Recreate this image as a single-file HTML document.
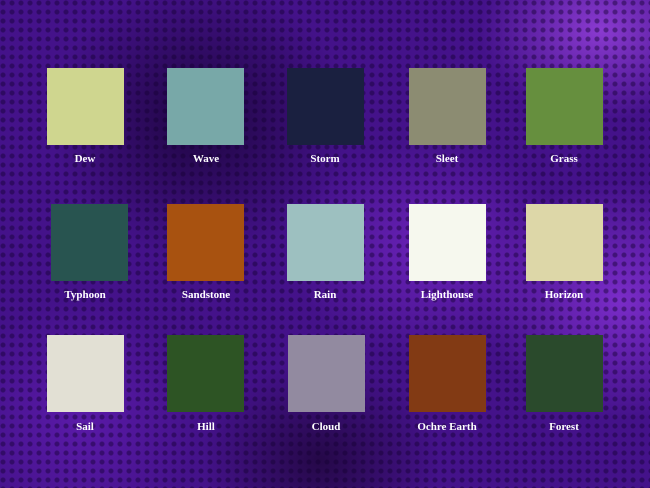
<!DOCTYPE html><html><head><style>
body{margin:0;width:650px;height:488px;overflow:hidden;position:relative;
background:
radial-gradient(circle at 3px 3px,rgba(20,0,50,.45) 2px,transparent 3px) 0 0/9px 9px,
radial-gradient(ellipse 120px 90px at 600px 30px,#8a3ad0,transparent),
radial-gradient(ellipse 140px 120px at 620px 300px,#7a2cc8,transparent),
radial-gradient(ellipse 140px 110px at 430px 250px,#6a22b8,transparent),
radial-gradient(ellipse 120px 120px at 80px 420px,#5a1aa8,transparent),
radial-gradient(ellipse 150px 140px at 200px 120px,#1e0540,transparent),
radial-gradient(ellipse 120px 100px at 320px 460px,#250848,transparent),
#44128a;}
.s{position:absolute;width:77px;height:77px}
.l{position:absolute;width:120px;text-align:center;color:#fff;font:bold 11px "Liberation Serif",serif}
</style></head><body>
<div class="s" style="left:47px;top:68px;background:#cfd68f"></div>
<div class="s" style="left:167px;top:68px;background:#78a8a8"></div>
<div class="s" style="left:287px;top:68px;background:#1a2040"></div>
<div class="s" style="left:409px;top:68px;background:#8c8c72"></div>
<div class="s" style="left:526px;top:68px;background:#668f3e"></div>
<div class="s" style="left:51px;top:204px;background:#285450"></div>
<div class="s" style="left:167px;top:204px;background:#a85210"></div>
<div class="s" style="left:287px;top:204px;background:#9dc0c0"></div>
<div class="s" style="left:409px;top:204px;background:#f6f8ee"></div>
<div class="s" style="left:526px;top:204px;background:#ddd7a8"></div>
<div class="s" style="left:47px;top:335px;background:#e2e0d4"></div>
<div class="s" style="left:167px;top:335px;background:#2d5424"></div>
<div class="s" style="left:288px;top:335px;background:#928aa0"></div>
<div class="s" style="left:409px;top:335px;background:#823a14"></div>
<div class="s" style="left:526px;top:335px;background:#2a4a2c"></div>
<div class="l" style="left:25px;top:153px">Dew</div>
<div class="l" style="left:146px;top:153px">Wave</div>
<div class="l" style="left:265px;top:153px">Storm</div>
<div class="l" style="left:387px;top:153px">Sleet</div>
<div class="l" style="left:504px;top:153px">Grass</div>
<div class="l" style="left:25px;top:289px">Typhoon</div>
<div class="l" style="left:146px;top:289px">Sandstone</div>
<div class="l" style="left:265px;top:289px">Rain</div>
<div class="l" style="left:387px;top:289px">Lighthouse</div>
<div class="l" style="left:504px;top:289px">Horizon</div>
<div class="l" style="left:25px;top:421px">Sail</div>
<div class="l" style="left:146px;top:421px">Hill</div>
<div class="l" style="left:266px;top:421px">Cloud</div>
<div class="l" style="left:387px;top:421px">Ochre Earth</div>
<div class="l" style="left:504px;top:421px">Forest</div>
</body></html>
